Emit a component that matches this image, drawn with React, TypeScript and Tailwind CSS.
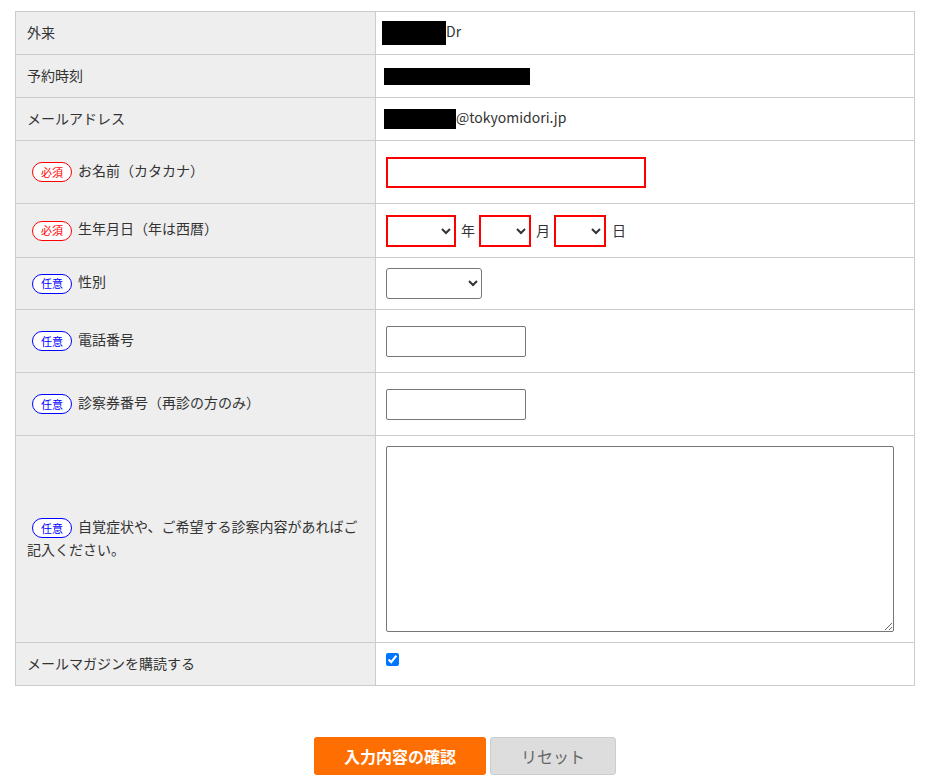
import React from "react";

const font = { fontFamily: '"Noto Sans CJK JP", "Noto Sans", sans-serif' };

function Badge({ required }: { required?: boolean }) {
  return (
    <span
      className={`inline-flex items-center justify-center w-[40px] h-[20px] rounded-full border text-[11px] leading-none align-middle ml-[5px] mr-[6px] bg-white ${
        required ? "border-[#ff0000] text-[#ff0000]" : "border-[#0000ff] text-[#0000ff]"
      }`}
    >
      {required ? "必須" : "任意"}
    </span>
  );
}

function Row({
  h,
  label,
  children,
  top,
}: {
  h: string;
  label: React.ReactNode;
  children?: React.ReactNode;
  top?: boolean;
}) {
  return (
    <div className={`flex border-b border-[#cccccc] ${h}`}>
      <div className="w-[360px] shrink-0 flex items-center bg-[#eeeeee] border-r border-[#cccccc] pl-[11px] pr-[12px] pb-[3px] text-[14px] leading-[22px]">
        <div>{label}</div>
      </div>
      <div
        className={`flex-1 flex pl-[10px] text-[14px] ${
          top ? "items-start pt-[10px]" : "items-center"
        }`}
      >
        {children}
      </div>
    </div>
  );
}

export default function App() {
  return (
    <div className="bg-white min-h-[780px] text-[#333333]" style={font}>
      <div className="pt-[11px] pl-[15px]">
        <div className="w-[900px] border-t border-l border-r border-[#cccccc]">
          <Row h="h-[43px]" label="外来">
            <span className="-ml-[4px] inline-block w-[64px] h-[24px] bg-black" />
            <span className="-mt-[3px]">Dr</span>
          </Row>
          <Row h="h-[43px]" label="予約時刻">
            <span className="-ml-[2px] inline-block w-[146px] h-[17px] bg-black" />
          </Row>
          <Row h="h-[43px]" label="メールアドレス">
            <span className="-ml-[2px] inline-block w-[72px] h-[20px] bg-black" />
            <span className="-mt-[3px]">@tokyomidori.jp</span>
          </Row>
          <Row
            h="h-[63px]"
            label={
              <>
                <Badge required />
                お名前（カタカナ）
              </>
            }
          >
            <input
              type="text"
              className="w-[260px] h-[31px] border-2 border-[#ff0000] bg-white"
            />
          </Row>
          <Row
            h="h-[54px]"
            label={
              <>
                <Badge required />
                生年月日（年は西暦）
              </>
            }
          >
            <select className="w-[70px] h-[32px] border-2 border-[#ff0000] bg-white">
              <option></option>
            </select>
            <span className="ml-[5px] mr-[4px]">年</span>
            <select className="w-[52px] h-[32px] border-2 border-[#ff0000] bg-white">
              <option></option>
            </select>
            <span className="ml-[5px] mr-[4px]">月</span>
            <select className="w-[52px] h-[32px] border-2 border-[#ff0000] bg-white">
              <option></option>
            </select>
            <span className="ml-[6px]">日</span>
          </Row>
          <Row
            h="h-[52px]"
            label={
              <>
                <Badge />
                性別
              </>
            }
          >
            <select className="w-[96px] h-[31px] border border-[#767676] rounded-[3px] bg-white">
              <option></option>
            </select>
          </Row>
          <Row
            h="h-[63px]"
            label={
              <>
                <Badge />
                電話番号
              </>
            }
          >
            <input
              type="text"
              className="w-[140px] h-[31px] border border-[#767676] rounded-[2px] bg-white"
            />
          </Row>
          <Row
            h="h-[63px]"
            label={
              <>
                <Badge />
                診察券番号（再診の方のみ）
              </>
            }
          >
            <input
              type="text"
              className="w-[140px] h-[31px] border border-[#767676] rounded-[2px] bg-white"
            />
          </Row>
          <Row
            h="h-[207px]"
            label={
              <>
                <Badge />
                自覚症状や、ご希望する診察内容があればご記入ください。
              </>
            }
          >
            <textarea className="w-[508px] h-[186px] border border-[#767676] rounded-[2px] bg-white" />
          </Row>
          <Row h="h-[43px]" label="メールマガジンを購読する" top>
            <input type="checkbox" defaultChecked className="w-[13px] h-[13px]" />
          </Row>
        </div>
      </div>
      <div className="flex justify-center gap-[4px] mt-[51px] pr-[1px]">
        <button className="w-[172px] h-[38px] rounded-[3px] bg-[#ff6e00] text-white text-[16px] font-bold">
          入力内容の確認
        </button>
        <button className="w-[126px] h-[38px] rounded-[3px] bg-[#dddddd] border border-[#cccccc] text-[#666666] text-[16px]">
          リセット
        </button>
      </div>
    </div>
  );
}
